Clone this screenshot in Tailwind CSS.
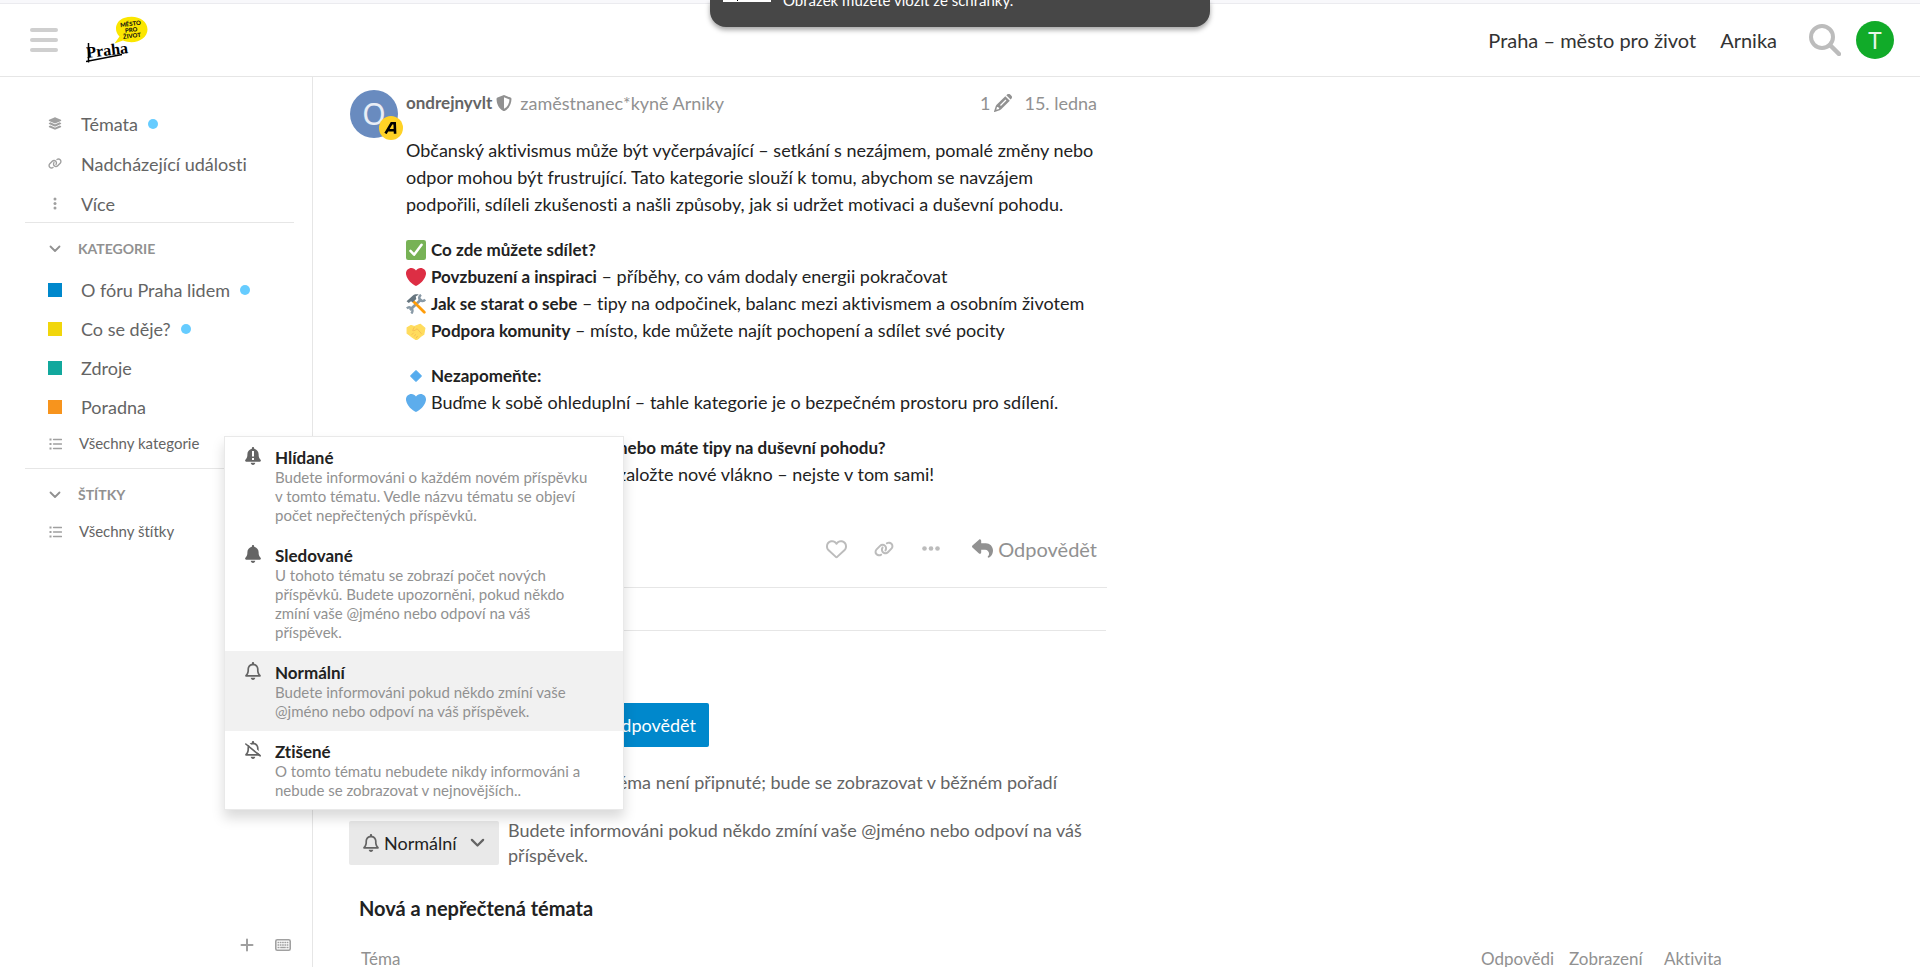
<!DOCTYPE html>
<html lang="cs">
<head>
  <meta charset="UTF-8" />
  <meta name="viewport" content="width=device-width, initial-scale=1.0" />
  <title>Fórum Praha lidem</title>
  <script src="https://cdn.jsdelivr.net/npm/@tailwindcss/browser@4"></script>
</head>
<body class="relative flex h-screen flex-col overflow-hidden bg-white font-['Lato','Noto_Sans',sans-serif] text-lg text-[#222] [font-variant-ligatures:none]">

  <!-- Icons -->
  <svg class="hidden">
    <symbol id="layers" viewBox="0 0 576 512"><path d="M264.5 5.2c14.9-6.9 32.1-6.9 47 0l218.6 101c8.5 3.9 13.9 12.4 13.9 21.8s-5.4 17.9-13.9 21.8l-218.6 101c-14.9 6.9-32.1 6.9-47 0L45.9 149.8C37.4 145.8 32 137.3 32 128s5.4-17.9 13.9-21.8L264.5 5.2zM476.9 209.6l53.2 24.6c8.5 3.9 13.9 12.4 13.9 21.8s-5.4 17.9-13.9 21.8l-218.6 101c-14.9 6.9-32.1 6.9-47 0L45.9 277.8C37.4 273.8 32 265.3 32 256s5.4-17.9 13.9-21.8l53.2-24.6 152 70.2c23.4 10.8 50.4 10.8 73.8 0l152-70.2zm-152 198.2l152-70.2 53.2 24.6c8.5 3.9 13.9 12.4 13.9 21.8s-5.4 17.9-13.9 21.8l-218.6 101c-14.9 6.9-32.1 6.9-47 0L45.9 405.8C37.4 401.8 32 393.3 32 384s5.4-17.9 13.9-21.8l53.2-24.6 152 70.2c23.4 10.8 50.4 10.8 73.8 0z"/></symbol>
    <symbol id="link" viewBox="0 0 640 512"><path d="M579.8 267.7c56.5-56.5 56.5-148 0-204.5c-50-50-128.8-56.5-186.3-15.4l-1.6 1.1c-14.4 10.3-17.7 30.3-7.4 44.6s30.3 17.7 44.6 7.4l1.6-1.1c32.1-22.9 76-19.3 103.8 8.6c31.5 31.5 31.5 82.5 0 114L422.3 334.8c-31.5 31.5-82.5 31.5-114 0c-27.9-27.9-31.5-71.8-8.6-103.8l1.1-1.6c10.3-14.4 6.9-34.4-7.4-44.6s-34.4-6.9-44.6 7.4l-1.1 1.6C206.5 251.2 213 330 263 380c56.5 56.5 148 56.5 204.5 0L579.8 267.7zM60.2 244.3c-56.5 56.5-56.5 148 0 204.5c50 50 128.8 56.5 186.3 15.4l1.6-1.1c14.4-10.3 17.7-30.3 7.4-44.6s-30.3-17.7-44.6-7.4l-1.6 1.1c-32.1 22.9-76 19.3-103.8-8.6C74 372 74 321 105.5 289.5L217.7 177.2c31.5-31.5 82.5-31.5 114 0c27.9 27.9 31.5 71.8 8.6 103.9l-1.1 1.6c-10.3 14.4-6.9 34.4 7.4 44.6s34.4 6.9 44.6-7.4l1.1-1.6C433.5 260.8 427 182 377 132c-56.5-56.5-148-56.5-204.5 0L60.2 244.3z"/></symbol>
    <symbol id="bell" viewBox="0 0 448 512"><path d="M224 0c-17.7 0-32 14.3-32 32V51.2C119 66 64 130.6 64 208v18.8c0 47-17.3 92.4-48.5 127.6l-7.4 8.3c-8.4 9.4-10.4 22.9-5.3 34.4S19.4 416 32 416H416c12.6 0 24-7.4 29.2-18.9s3.1-25-5.3-34.4l-7.4-8.3C401.3 319.2 384 273.9 384 226.8V208c0-77.4-55-142-128-156.8V32c0-17.7-14.3-32-32-32zm45.3 493.3c12-12 18.7-28.3 18.7-45.3H224 160c0 17 6.7 33.3 18.7 45.3s28.3 18.7 45.3 18.7s33.3-6.7 45.3-18.7z"/></symbol>
    <symbol id="bell-outline" viewBox="0 0 448 512"><path d="M224 0c-17.7 0-32 14.3-32 32V49.9C119.5 61.4 64 124.2 64 200v33.4c0 45.4-15.5 89.5-43.8 124.9L5.3 377c-5.8 7.2-6.9 17.1-2.9 25.4S14.8 416 24 416H424c9.2 0 17.6-5.3 21.6-13.6s2.9-18.2-2.9-25.4l-14.9-18.6C399.5 322.9 384 278.8 384 233.4V200c0-75.8-55.5-138.6-128-150.1V32c0-17.7-14.3-32-32-32zm0 96h8c57.4 0 104 46.6 104 104v33.4c0 47.9 13.9 94.6 39.7 134.6H72.3C98.1 328 112 281.3 112 233.4V200c0-57.4 46.6-104 104-104h8zm64 352H224 160c0 17 6.7 33.3 18.7 45.3s28.3 18.7 45.3 18.7s33.3-6.7 45.3-18.7s18.7-28.3 18.7-45.3z"/></symbol>
    <symbol id="reply" viewBox="0 0 512 512"><path d="M205 34.8c11.5 5.1 19 16.6 19 29.2v64H336c97.2 0 176 78.8 176 176c0 113.3-81.5 163.9-100.2 174.1c-2.5 1.4-5.3 1.9-8.1 1.9c-10.9 0-19.7-8.9-19.7-19.7c0-7.5 4.3-14.4 9.8-19.5c9.4-8.8 22.2-26.4 22.2-56.7c0-53-43-96-96-96H224v64c0 12.6-7.4 24.1-19 29.2s-25 3-34.4-5.4l-160-144C3.9 225.7 0 217.1 0 208s3.9-17.7 10.6-23.8l160-144c9.4-8.5 22.9-10.6 34.4-5.4z"/></symbol>
    <symbol id="heart-outline" viewBox="0 0 512 512"><path d="M225.8 468.2l-2.5-2.3L48.1 303.2C17.4 274.7 0 234.7 0 192.8v-3.3c0-70.4 50-130.8 119.2-144C158.6 37.9 198.9 47 231 69.6c9 6.4 17.4 13.8 25 22.3c4.2-4.8 8.7-9.2 13.5-13.3c3.7-3.2 7.5-6.2 11.5-9C313.1 47 353.4 37.9 392.8 45.4C462 58.6 512 119.1 512 189.5v3.3c0 41.9-17.4 81.9-48.1 110.4L288.7 465.9l-2.5 2.3c-8.2 7.6-19 11.9-30.2 11.9s-22-4.2-30.2-11.9zM239.1 145c-.4-.3-.7-.7-1-1.1l-17.8-20c-23.1-25.9-58-37.7-92-31.2C81.6 101.5 48 142.1 48 189.5v3.3c0 28.5 11.9 55.8 32.8 75.2L256 430.7 431.2 268c20.9-19.4 32.8-46.7 32.8-75.2v-3.3c0-47.3-33.6-88-80.1-96.9c-34-6.5-69 5.4-92 31.2l-18 20.2c-.3 .4-.7 .7-1 1.1c-4.5 4.5-10.6 7-16.9 7s-12.4-2.5-16.9-7z"/></symbol>
    <symbol id="chevron" viewBox="0 0 12 8"><path d="M1.5 1.5 6 6l4.5-4.5" fill="none" stroke="currentColor" stroke-width="1.8" stroke-linecap="round" stroke-linejoin="round"/></symbol>
    <symbol id="list" viewBox="0 0 13 12"><path d="M4.500 1.500h8M4.500 6h8M4.500 10.500h8" stroke="currentColor" stroke-width="1.300" stroke-linecap="round"/><path d="M.5.5h2v2h-2zM.5 5h2v2h-2zM.5 9.500h2v2h-2z"/></symbol>
    <symbol id="heart" viewBox="0 0 36 36"><path d="M36 11.700c0-5.400-4.400-9.700-9.800-9.700-3.300 0-6.300 1.700-8.200 4.300C16.100 3.700 13.100 2 9.800 2 4.400 2 0 6.300 0 11.700c0 .8.100 1.500.3 2.300C1.700 22.700 11.300 31.900 18 34c6.700-2.100 16.300-11.300 17.700-20 .2-.8.300-1.500.3-2.300z"/></symbol>
  </svg>

  <!-- Header -->
  <header class="shrink-0 border-b border-[#e6e6e6]">
    <div class="h-1 border-b border-[#ebebef] bg-[#f8f8fb]"></div>
    <div class="flex h-[72px] items-center pr-[26px] pl-[30px]">
      <button aria-label="Menu" class="flex w-7 flex-col gap-[6px]">
        <span class="h-1 w-7 rounded-full bg-[#cfcfcf]"></span>
        <span class="h-1 w-7 rounded-full bg-[#cfcfcf]"></span>
        <span class="h-1 w-7 rounded-full bg-[#cfcfcf]"></span>
      </button>
      <a href="#" aria-label="Praha" class="ml-7">
        <svg class="h-[48px] w-[64px]" viewBox="0 0 64 48">
          <path d="M28.500 27.500l5-7C28 15.500 28.500 5.500 38 2 49-2 61.500 3 61.500 13.500 61.500 23 49 29.500 37 24.500z" fill="#fbe600"/>
          <g transform="rotate(-7 45 12)" font-family="Lato" font-weight="900" font-size="6" text-anchor="middle" fill="#111">
            <text x="45" y="10">MĚSTO</text><text x="45" y="16">PRO</text><text x="45" y="22">ŽIVOT</text>
          </g>
          <text x="1" y="42" transform="rotate(-7 1 42)" font-family="Liberation Serif" font-weight="700" font-size="16" fill="#000">Praha</text>
          <path d="M0 45.500l36-7M2.500 27v19.500" stroke="#000" stroke-width="1.500"/>
        </svg>
      </a>
      <nav class="ml-auto flex items-center text-xl text-[#333]">
        <a href="#">Praha – město pro život</a>
        <a href="#" class="ml-6">Arnika</a>
        <button aria-label="Hledat" class="ml-8"><svg class="size-8 text-[#bcbcbc]" viewBox="0 0 32 32" fill="none" stroke="currentColor"><circle cx="13" cy="13" r="11" stroke-width="4"/><path d="M21 21l9 9" stroke-width="4.500" stroke-linecap="round"/></svg></button>
        <button aria-label="Profil" class="ml-[15px] flex size-[38px] items-center justify-center rounded-full bg-[#11ab29] font-['Noto_Sans'] text-2xl text-white/90">T</button>
      </nav>
    </div>
  </header>

  <div class="flex min-h-0 flex-1">
    <!-- Sidebar -->
    <aside class="w-[313px] shrink-0 border-r border-[#e6e6e6] px-[25px] pt-[25px] text-[#646464]">
      <ul class="mr-[-7px] border-b border-[#e6e6e6]">
        <li><a href="#" class="flex h-10 items-center pt-[3px]"><svg class="ml-[23px] h-[13px] w-[14px] fill-[#a0a0a0]"><use href="#layers"/></svg><span class="ml-[19px]">Témata</span><i class="ml-[10px] size-[10px] rounded-full bg-[#66ccff]"></i></a></li>
        <li><a href="#" class="flex h-10 items-center pt-[3px]"><svg class="ml-[23px] h-[13px] w-[14px] fill-[#a0a0a0]"><use href="#link"/></svg><span class="ml-[19px]">Nadcházející události</span></a></li>
        <li><a href="#" class="flex h-10 items-center pt-[3px]"><svg class="ml-[23px] h-[13px] w-[14px] fill-[#a0a0a0]" viewBox="0 0 14 12"><circle cx="7" cy="1.500" r="1.500"/><circle cx="7" cy="6" r="1.500"/><circle cx="7" cy="10.500" r="1.500"/></svg><span class="ml-[19px]">Více</span></a></li>
      </ul>
      <div class="mr-[-7px] border-b border-[#e6e6e6] pb-[6px]">
        <button class="flex h-[47px] items-center pt-[5px] text-sm font-bold text-[#919191]"><svg class="ml-6 h-2 w-3"><use href="#chevron"/></svg><span class="ml-[17px]">KATEGORIE</span></button>
        <ul>
          <li><a href="#" class="flex h-[39px] items-center"><i class="ml-[23px] size-[14px] bg-[#0088cc]"></i><span class="ml-[19px]">O fóru Praha lidem</span><i class="ml-[10px] size-[10px] rounded-full bg-[#66ccff]"></i></a></li>
          <li><a href="#" class="flex h-[39px] items-center"><i class="ml-[23px] size-[14px] bg-[#f1d60c]"></i><span class="ml-[19px]">Co se děje?</span><i class="ml-[10px] size-[10px] rounded-full bg-[#66ccff]"></i></a></li>
          <li><a href="#" class="flex h-[39px] items-center"><i class="ml-[23px] size-[14px] bg-[#12a89d]"></i><span class="ml-[19px]">Zdroje</span></a></li>
          <li><a href="#" class="flex h-[39px] items-center"><i class="ml-[23px] size-[14px] bg-[#f7941d]"></i><span class="ml-[19px]">Poradna</span></a></li>
        </ul>
        <a href="#" class="flex h-9 items-center text-[15px]"><svg class="ml-6 h-3 w-[13px] fill-current text-[#a0a0a0]"><use href="#list"/></svg><span class="ml-[17px]">Všechny kategorie</span></a>
      </div>
      <button class="flex h-[45px] items-center pt-[7px] text-sm font-bold text-[#919191]"><svg class="ml-6 h-2 w-3"><use href="#chevron"/></svg><span class="ml-[17px]">ŠTÍTKY</span></button>
      <a href="#" class="flex h-9 items-center text-[15px]"><svg class="ml-6 h-3 w-[13px] fill-current text-[#a0a0a0]"><use href="#list"/></svg><span class="ml-[17px]">Všechny štítky</span></a>
      <!-- Sidebar footer, pinned to the bottom of the window -->
      <div class="fixed bottom-[15px] left-[240px] flex items-center gap-[21px] text-[#a0a0a0]">
        <button aria-label="Přidat sekci"><svg class="size-[14px]" viewBox="0 0 14 14" stroke="currentColor" stroke-width="2" stroke-linecap="round"><path d="M7 1.500v11M1.500 7h11"/></svg></button>
        <button aria-label="Klávesové zkratky"><svg class="h-3 w-4" viewBox="0 0 16 12" fill="none" stroke="currentColor"><rect x=".8" y=".8" width="14.400" height="10.400" rx="1.500" stroke-width="1.600"/><path d="M2.500 3.500h11M2.500 6h11" stroke-width="1.600" stroke-dasharray="1.700 .6"/><path d="M2.500 8.500h2M5.200 8.500h5.600M11.500 8.500h2" stroke-width="1.600"/></svg></button>
      </div>
    </aside>

    <!-- Topic -->
    <main class="min-w-0 flex-1 pl-9">
      <article class="ml-px flex w-[757px] gap-2 border-b border-[#e6e6e6] pt-[13px]">
        <div class="relative size-12 shrink-0">
          <div class="flex size-12 items-center justify-center rounded-full bg-[#698bbf] font-['Noto_Sans'] text-3xl text-white/85">O</div>
          <div class="absolute -right-[5px] -bottom-[2px] flex size-6 items-center justify-center rounded-full bg-[#ffd226]">
            <svg class="h-3 w-[14px]" viewBox="0 0 14 12" fill="none" stroke="#000" stroke-width="2.600"><path d="M1.500 11.500 7.500 1.300h3.200l.4 10.500M4 8.200h7"/></svg>
          </div>
        </div>
        <div class="w-[691px]">
          <div class="flex h-[26px] items-center text-[#919191]">
            <a href="#" class="text-[17px] font-bold text-[#646464]">ondrejnyvlt</a>
            <svg class="ml-1 size-4" viewBox="0 0 16 16"><path d="M8 0l6.500 2.600c.6.300 1 .8 1 1.400C15.300 9 13.300 13.500 8.600 15.900a1.400 1.400 0 0 1-1.200 0C2.700 13.500.7 9 .5 4c0-.6.400-1.100 1-1.400zM8 2.200v11.600C11.600 12 13.300 8.300 13.500 4.400z" fill="currentColor" fill-rule="evenodd"/></svg>
            <span class="ml-2">zaměstnanec*kyně Arniky</span>
            <button class="ml-auto flex items-center gap-1">1<svg class="size-[18px] fill-current" viewBox="0 0 18 18"><path d="M12.300 1.200l.9-.8c.9-.9 2.200-.7 3 .1l1.200 1.200c.8.800.9 2.100 0 3l-.8.900zM11.300 2.200l4.500 4.500-8.600 8.600c-.4.400-1 .7-1.500.9L.6 18c-.4.100-.7-.2-.6-.6l1.700-5.100c.2-.6.500-1.100.9-1.500zM3 13l-.7 2.700 2.800-.7v-1.500H4V13zM11.500 5.500 6 11l.9.900 5.500-5.500z" fill-rule="evenodd"/></svg></button>
            <a href="#" class="ml-3">15. ledna</a>
          </div>
          <div class="flex flex-col gap-[18px] pt-[21px] leading-[27px] whitespace-nowrap">
            <p>Občanský aktivismus může být vyčerpávající – setkání s nezájmem, pomalé změny nebo<br>odpor mohou být frustrující. Tato kategorie slouží k tomu, abychom se navzájem<br>podpořili, sdíleli zkušenosti a našli způsoby, jak si udržet motivaci a duševní pohodu.</p>
            <ul>
              <li class="flex items-center gap-[5px]"><svg class="size-5" viewBox="0 0 36 36"><rect width="36" height="36" rx="4" fill="#77b255"/><path d="M8 19.500l6.500 7L28 8.500" fill="none" stroke="#fff" stroke-width="4.500" stroke-linecap="round" stroke-linejoin="round"/></svg><b class="text-[17px] leading-[27px]">Co zde můžete sdílet?</b></li>
              <li class="flex items-center gap-[5px]"><svg class="size-5 fill-[#dd2e44]"><use href="#heart"/></svg><span><b class="text-[17px]">Povzbuzení a inspiraci</b> – příběhy, co vám dodaly energii pokračovat</span></li>
              <li class="flex items-center gap-[5px]"><svg class="size-5" viewBox="0 0 36 36" fill="none"><path d="M7 29 28 9" stroke="#8899a6" stroke-width="5"/><path d="M27 1.500c-4 3-4 7-1.500 9.500s6.500 2.500 9-1M1.500 26c3-3 6-2.500 8.500 0s2 6.500-.5 9" stroke="#8899a6" stroke-width="4.500"/><path d="M13 13l20 20" stroke="#ff9d0a" stroke-width="5" stroke-linecap="round"/><path d="M1 13 12 3c3-2.500 7-3 11-2l-5.500 3.500 1 4.500-6.500 6-3-2-4 3z" fill="#66757f"/></svg><span><b class="text-[17px]">Jak se starat o sebe</b> – tipy na odpočinek, balanc mezi aktivismem a osobním životem</span></li>
              <li class="flex items-center gap-[5px]"><svg class="size-5" viewBox="0 0 36 36"><path d="M2 12l7-4 6 2 5-2 3-1 3-1 8 7-2 11-6 4-3 3-3 2-3 0-6-4-5-4-4-3z" fill="#ffdc5d" stroke="#ffdc5d" stroke-linejoin="round" stroke-width="2"/><path d="M15 11l-3 6c3 2 6-2 8-3l8 9M10 25l4-4M14 28l4-4M18 31l3-4" fill="none" stroke="#f4b350" stroke-width="1.300"/></svg><span><b class="text-[17px]">Podpora komunity</b> – místo, kde můžete najít pochopení a sdílet své pocity</span></li>
            </ul>
            <ul>
              <li class="flex items-center gap-[5px]"><svg class="size-5" viewBox="0 0 36 36"><path d="M18 8.500 27.500 18 18 27.500 8.500 18z" fill="#55acee" stroke="#55acee" stroke-width="2" stroke-linejoin="round"/></svg><b class="text-[17px] leading-[27px]">Nezapomeňte:</b></li>
              <li class="flex items-center gap-[5px]"><svg class="size-5 fill-[#5dadec]"><use href="#heart"/></svg>Buďme k sobě ohleduplní – tahle kategorie je o bezpečném prostoru pro sdílení.</li>
            </ul>
            <p class="pl-[212px]"><b class="text-[17px]">nebo máte tipy na duševní pohodu?</b><br>založte nové vlákno – nejste v tom sami!</p>
          </div>
          <div class="flex h-[99px] items-center justify-end pt-[22px] text-xl text-[#919191]">
            <button aria-label="To se mi líbí"><svg class="h-[22px] w-[21px] fill-[#bcbcbc]"><use href="#heart-outline"/></svg></button>
            <button aria-label="Odkaz" class="ml-[27px]"><svg class="h-4 w-5 fill-[#bcbcbc]"><use href="#link"/></svg></button>
            <button aria-label="Další" class="ml-7"><svg class="h-[5px] w-[18px] fill-[#bcbcbc]" viewBox="0 0 18 5"><circle cx="2.500" cy="2.500" r="2.300"/><circle cx="9" cy="2.500" r="2.300"/><circle cx="15.500" cy="2.500" r="2.300"/></svg></button>
            <button class="ml-8 flex items-center gap-[5px]"><svg class="size-[21px] fill-current"><use href="#reply"/></svg>Odpovědět</button>
          </div>
        </div>
      </article>
      <div class="ml-px h-[43px] w-[756px] border-b border-[#e6e6e6]"></div>

      <!-- Topic footer -->
      <div class="flex w-[360px] justify-end pt-[72px]">
        <button class="flex h-11 items-center gap-2 rounded-xs bg-[#0088cc] px-[13px] text-white"><svg class="size-[18px] fill-current"><use href="#reply"/></svg>Odpovědět</button>
      </div>
      <p class="w-[708px] pt-[23px] text-right leading-[25px] text-[#646464]">Téma není připnuté; bude se zobrazovat v běžném pořadí</p>
      <div class="flex items-center gap-[9px] pt-[23px]">
        <button class="flex h-11 w-[150px] items-center rounded-xs bg-[#e9e9e9] pl-[14px]"><svg class="h-[18px] w-4 fill-[#646464]"><use href="#bell-outline"/></svg><span class="ml-[5px]">Normální</span><svg class="mr-[14px] ml-auto h-[10px] w-[15px] text-[#646464]"><use href="#chevron"/></svg></button>
        <p class="leading-[25px] whitespace-nowrap text-[#646464]">Budete informováni pokud někdo zmíní vaše @jméno nebo odpoví na váš<br>příspěvek.</p>
      </div>

      <!-- Suggested topics -->
      <h2 class="pt-[26px] pl-[10px] text-xl leading-7 font-bold">Nová a nepřečtená témata</h2>
      <table class="mt-6 ml-3 w-[1361px] text-left text-[#919191]">
        <thead>
          <tr class="h-[25px] text-[17px]">
            <th class="font-normal">Téma</th>
            <th class="w-[88px] font-normal">Odpovědi</th>
            <th class="w-[95px] font-normal">Zobrazení</th>
            <th class="w-[58px] font-normal">Aktivita</th>
          </tr>
        </thead>
      </table>
    </main>
  </div>

  <!-- Notification level menu -->
  <ul class="absolute top-[436px] left-[224px] w-[400px] border border-[#e9e9e9] bg-white text-[15px] leading-[19px] whitespace-nowrap text-[#919191] shadow-[0_8px_12px_rgba(0,0,0,0.15)]">
    <li><button class="flex w-full gap-[14px] pt-[10px] pr-4 pb-[9px] pl-5 text-left">
      <span class="relative"><svg class="h-[18px] w-4 fill-[#646464]"><use href="#bell"/></svg><svg class="absolute top-1 left-[7px] h-[9px] w-[2px] fill-white" viewBox="0 0 2 9"><path d="M0 0h2v5.500H0zM0 7h2v2H0z"/></svg></span>
      <span><b class="block text-[17px] leading-[21px] text-[#222]">Hlídané</b>Budete informováni o každém novém příspěvku<br>v tomto tématu. Vedle názvu tématu se objeví<br>počet nepřečtených příspěvků.</span></button></li>
    <li><button class="flex w-full gap-[14px] pt-[11px] pr-4 pb-[9px] pl-5 text-left">
      <svg class="h-[18px] w-4 fill-[#646464]"><use href="#bell"/></svg>
      <span><b class="block text-[17px] leading-[21px] text-[#222]">Sledované</b>U tohoto tématu se zobrazí počet nových<br>příspěvků. Budete upozorněni, pokud někdo<br>zmíní vaše @jméno nebo odpoví na váš<br>příspěvek.</span></button></li>
    <li><button class="flex w-full gap-[14px] bg-[#f1f1f1] pt-[11px] pr-4 pb-[10px] pl-5 text-left">
      <svg class="h-[18px] w-4 fill-[#646464]"><use href="#bell-outline"/></svg>
      <span><b class="block text-[17px] leading-[21px] text-[#222]">Normální</b>Budete informováni pokud někdo zmíní vaše<br>@jméno nebo odpoví na váš příspěvek.</span></button></li>
    <li><button class="flex w-full gap-[14px] pt-[10px] pr-4 pb-[9px] pl-5 text-left">
      <span class="relative"><svg class="h-[18px] w-4 fill-[#646464]"><use href="#bell-outline"/></svg><svg class="absolute top-0 left-0 h-[18px] w-4" viewBox="0 0 16 18" fill="none" stroke-linecap="round"><path d="M2 1.500l14 11.500" stroke="#fff" stroke-width="2"/><path d="M.8 3l14.400 11.800" stroke="#646464" stroke-width="1.600"/></svg></span>
      <span><b class="block text-[17px] leading-[21px] text-[#222]">Ztišené</b>O tomto tématu nebudete nikdy informováni a<br>nebude se zobrazovat v nejnovějších..</span></button></li>
  </ul>

  <!-- Toast sliding out of the top edge -->
  <div class="absolute top-0 left-[710px] flex h-[27px] w-[500px] rounded-b-2xl bg-[#474747] pl-[13px] text-[15px] text-white shadow-[0_3px_5px_rgba(0,0,0,0.35)]">
    <span class="h-[2px] w-12 bg-white pl-[14px]"><i class="block h-px w-px bg-black"></i></span>
    <span class="-mt-[10px] ml-3 h-5 leading-5">Obrázek můžete vložit ze schránky.</span>
  </div>

</body>
</html>
